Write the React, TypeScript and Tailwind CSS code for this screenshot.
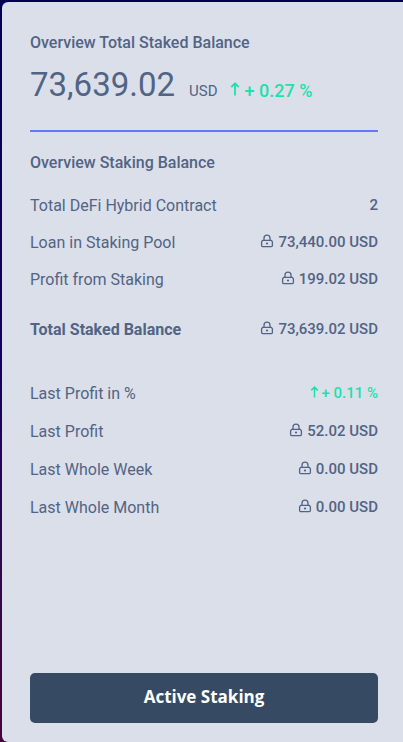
const summary = [
  { label: 'Total DeFi Hybrid Contract', value: '2', locked: false },
  { label: 'Loan in Staking Pool', value: '73,440.00 USD', locked: true },
  { label: 'Profit from Staking', value: '199.02 USD', locked: true },
];

const profits = [
  { label: 'Last Profit', value: '52.02 USD' },
  { label: 'Last Whole Week', value: '0.00 USD' },
  { label: 'Last Whole Month', value: '0.00 USD' },
];

function LockIcon() {
  return (
    <svg
      className="mb-0.5 h-[14px] w-[14px] shrink-0"
      viewBox="0 0 14 14"
      fill="none"
      stroke="currentColor"
      strokeWidth="1.3"
      aria-hidden="true"
    >
      <path d="M4 6V4.2a3 3 0 0 1 6 0V6" />
      <path d="M2.6 6.3h8.8l1 1.5v3.8a1 1 0 0 1-1 1H2.6a1 1 0 0 1-1-1V7.8z" strokeLinejoin="round" />
      <circle cx="7" cy="9.5" r="1.1" fill="currentColor" stroke="none" />
    </svg>
  );
}

function ArrowUpIcon({ className }: { className: string }) {
  return (
    <svg
      className={className}
      viewBox="0 0 10 14"
      fill="none"
      stroke="currentColor"
      strokeWidth="1.8"
      aria-hidden="true"
    >
      <path d="M5 13.5V1.3M1.2 5.1 5 1.3l3.8 3.8" />
    </svg>
  );
}

function Amount({ value, locked = true }: { value: string; locked?: boolean }) {
  return (
    <dd className="flex items-center gap-1 text-[15px] leading-[22px] font-medium">
      {locked && <LockIcon />}
      {value}
    </dd>
  );
}

export default function App() {
  return (
    <div className="min-h-screen bg-linear-to-b from-[#02004f] via-[#18005a] to-[#45003c] pt-0.5 pl-0.5 font-['Roboto',sans-serif]">
      <section className="flex min-h-[calc(100vh-2px)] flex-col rounded-l-md bg-[#dbdfea] pt-[29px] pr-[25px] pb-[19px] pl-7 text-base leading-6 text-[#526484]">
        <h2 className="font-medium">Overview Total Staked Balance</h2>
        <div className="flex items-baseline border-b-2 border-[#6576ff] pt-2 pb-[23px]">
          <span className="text-[33px] leading-[44px]">73,639.02</span>
          <span className="ml-3.5 text-[15px]">USD</span>
          <span className="ml-3 flex items-center gap-[5px] text-lg font-medium text-[#1ee0ac]">
            <ArrowUpIcon className="mb-[3px] h-[14px] w-[10px]" />
            + 0.27 %
          </span>
        </div>

        <h2 className="mt-[19px] font-medium">Overview Staking Balance</h2>
        <dl className="mt-[19px] flex flex-col gap-[13px]">
          {summary.map((row) => (
            <div key={row.label} className="flex items-start justify-between">
              <dt>{row.label}</dt>
              <Amount value={row.value} locked={row.locked} />
            </div>
          ))}
          <div className="mt-[13px] flex items-start justify-between">
            <dt className="font-bold">Total Staked Balance</dt>
            <Amount value="73,639.02 USD" />
          </div>
        </dl>

        <dl className="mt-10 flex flex-col gap-[14px]">
          <div className="flex items-start justify-between">
            <dt>Last Profit in %</dt>
            <dd className="flex items-center gap-0.5 text-[15px] leading-[22px] font-medium text-[#1ee0ac]">
              <ArrowUpIcon className="mb-[3px] h-3 w-[9px]" />
              + 0.11 %
            </dd>
          </div>
          {profits.map((row) => (
            <div key={row.label} className="flex items-start justify-between">
              <dt>{row.label}</dt>
              <Amount value={row.value} />
            </div>
          ))}
        </dl>

        <button
          type="button"
          className="mt-auto h-[50px] w-full rounded-[5px] bg-[#364a63] pb-0.5 font-['Open_Sans',sans-serif] text-[17px] font-bold text-white"
        >
          Active Staking
        </button>
      </section>
    </div>
  );
}
